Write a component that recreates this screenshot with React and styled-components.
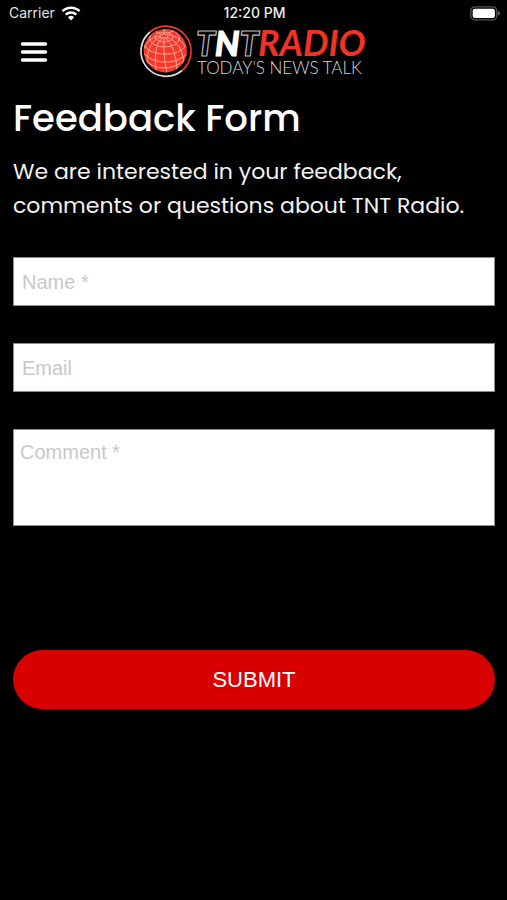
import React, { useState } from "react";
import styled, { createGlobalStyle } from "styled-components";

const GlobalStyle = createGlobalStyle`
  * {
    box-sizing: border-box;
  }

  body {
    margin: 0;
    background: #000;
    color: #fff;
    font-family: Poppins, Inter, sans-serif;
  }
`;

const Page = styled.div`
  min-height: 100vh;
  background: #000;
`;

const StatusBar = styled.div`
  display: grid;
  grid-template-columns: 1fr auto 1fr;
  align-items: center;
  height: 26px;
  padding: 0 7px 0 9px;
  font-family: Inter, sans-serif;
  font-size: 14px;
  line-height: 26px;
`;

const Carrier = styled.div`
  display: flex;
  align-items: center;
  gap: 6px;
  color: #e4e4e4;
`;

const Clock = styled.div`
  font-weight: 500;
  color: #eee;
`;

const BatteryIcon = styled.svg`
  justify-self: end;
`;

const Header = styled.header`
  display: grid;
  grid-template-columns: 1fr auto 1fr;
  align-items: center;
  height: 52px;
  padding: 0 20px;
`;

const MenuButton = styled.button`
  display: flex;
  justify-self: start;
  padding: 0;
  border: none;
  background: transparent;
  color: #fff;
  cursor: pointer;
`;

const LogoImage = styled.svg`
  overflow: visible;
`;

const Content = styled.main`
  padding: 16px 12px 0 13px;
`;

const Title = styled.h1`
  margin: 0;
  font-size: 37px;
  font-weight: 500;
  line-height: 48px;
`;

const Intro = styled.p`
  margin: 13px 0 34px;
  font-size: 22px;
  line-height: 34px;
  color: #f2f2f2;
`;

const Form = styled.form`
  display: flex;
  flex-direction: column;
`;

const Field = styled.input`
  width: 100%;
  height: 49px;
  margin-bottom: 37px;
  padding: 2px 8px 0;
  border: 1px solid #8c8c8c;
  border-radius: 0;
  outline: none;
  background: #fff;
  color: #222;
  font-family: "Helvetica Neue", "Liberation Sans", sans-serif;
  font-size: 20px;

  &::placeholder {
    color: #c8c8c8;
    opacity: 1;
  }
`;

const CommentField = styled(Field)`
  height: 97px;
  margin-bottom: 124px;
  padding: 10px 6px;
  line-height: 24px;
  resize: none;
`;

const SubmitButton = styled.button`
  height: 59px;
  border: none;
  border-radius: 30px;
  background: #d80000;
  color: #fff;
  font-family: "Helvetica Neue", "Liberation Sans", sans-serif;
  font-size: 22px;
  cursor: pointer;
`;

const WifiIcon = () => (
  <svg width="20" height="15" viewBox="0 0 20 15" aria-hidden="true">
    <g fill="none" stroke="#fff" strokeWidth="2.4">
      <path d="M1.4 5.2a12.4 12.4 0 0 1 17.2 0" />
      <path d="M4.7 8.6a7.6 7.6 0 0 1 10.6 0" />
    </g>
    <path d="M7 11.2a4.5 4.5 0 0 1 6 0L10 14.4z" fill="#fff" />
  </svg>
);

const Battery = () => (
  <BatteryIcon width="30" height="15" viewBox="0 0 30 15" aria-hidden="true">
    <rect x="0.8" y="0.8" width="26" height="13" rx="4" fill="none" stroke="#555" strokeWidth="1.3" />
    <rect x="2.7" y="2.7" width="22.2" height="9.2" rx="2" fill="#fff" />
    <path d="M28 5v4.6q2-.8 2-2.3T28 5z" fill="#666" />
  </BatteryIcon>
);

const MenuIcon = () => (
  <svg width="28" height="22" viewBox="0 0 28 22" aria-hidden="true">
    <path d="M2.5 3h23M2.5 11h23M2.5 19h23" stroke="#fff" strokeWidth="3.4" strokeLinecap="round" />
  </svg>
);

const Logo = () => (
  <LogoImage width="228" height="52" viewBox="0 0 228 52" role="img" aria-label="TNT Radio">
    <clipPath id="ball">
      <circle cx="25.3" cy="24.8" r="21.6" />
    </clipPath>
    <g fill="none" strokeWidth="1.7">
      <path d="M10 6A25 25 0 1 0 42 44.5" stroke="#ddd" />
      <path d="M10 6A25 25 0 0 1 42 44.5" stroke="#f03a28" />
    </g>
    <circle cx="25.3" cy="24.8" r="21.6" fill="#f5392a" />
    <g clipPath="url(#ball)" fill="none" stroke="#ffa597" strokeWidth="1">
      <ellipse cx="24" cy="10" rx="4" ry="2" />
      <ellipse cx="24" cy="11" rx="9" ry="5" />
      <ellipse cx="24.5" cy="12" rx="15" ry="9" />
      <path d="M4 18q3 9 19 10t23-8" />
      <path d="M3 26q6 9 20 10t24-8" />
      <path d="M6 35q8 7 18 7t20-7" />
      <path d="M21 11Q7 15 7 38" />
      <path d="M22 12Q13 20 16 44" />
      <path d="M24 12Q23 28 27 47" />
      <path d="M26 12Q36 22 37 44" />
      <path d="M27 11Q42 17 44 36" />
      <path d="M20 10Q8 11 3 24" />
      <path d="M28 9Q38 9 46 21" />
      <path d="M21 9L15 5M24 8V3M27 8l7-4" />
    </g>
    <text
      x="56"
      y="30"
      fill="#000"
      stroke="#b8b8b8"
      strokeWidth="1.2"
      fontFamily="Lato, sans-serif"
      fontWeight="900"
      fontStyle="italic"
      fontSize="34"
    >
      T<tspan fill="#fff" stroke="#fff">N</tspan>T
    </text>
    <text x="118" y="30" fill="#f23322" fontFamily="Lato, sans-serif" fontWeight="700" fontStyle="italic" fontSize="36">
      RADIO
    </text>
    <text x="57" y="48" fill="#d8d8d8" fontFamily="Lato, sans-serif" fontWeight="300" fontSize="17">
      TODAY'S NEWS TALK
    </text>
  </LogoImage>
);

const App = () => {
  const [feedback, setFeedback] = useState({ name: "", email: "", comment: "" });

  const onChange = (event) => {
    setFeedback({ ...feedback, [event.target.name]: event.target.value });
  };

  return (
    <Page>
      <GlobalStyle />
      <StatusBar>
        <Carrier>
          Carrier
          <WifiIcon />
        </Carrier>
        <Clock>12:20 PM</Clock>
        <Battery />
      </StatusBar>
      <Header>
        <MenuButton type="button" aria-label="Menu">
          <MenuIcon />
        </MenuButton>
        <Logo />
      </Header>
      <Content>
        <Title>Feedback Form</Title>
        <Intro>
          We are interested in your feedback, comments or questions about TNT
          Radio.
        </Intro>
        <Form onSubmit={(event) => event.preventDefault()}>
          <Field
            name="name"
            aria-label="Name"
            placeholder="Name *"
            value={feedback.name}
            onChange={onChange}
          />
          <Field
            name="email"
            type="email"
            aria-label="Email"
            placeholder="Email"
            value={feedback.email}
            onChange={onChange}
          />
          <CommentField
            as="textarea"
            name="comment"
            aria-label="Comment"
            placeholder="Comment *"
            value={feedback.comment}
            onChange={onChange}
          />
          <SubmitButton type="submit">SUBMIT</SubmitButton>
        </Form>
      </Content>
    </Page>
  );
};

export default App;
